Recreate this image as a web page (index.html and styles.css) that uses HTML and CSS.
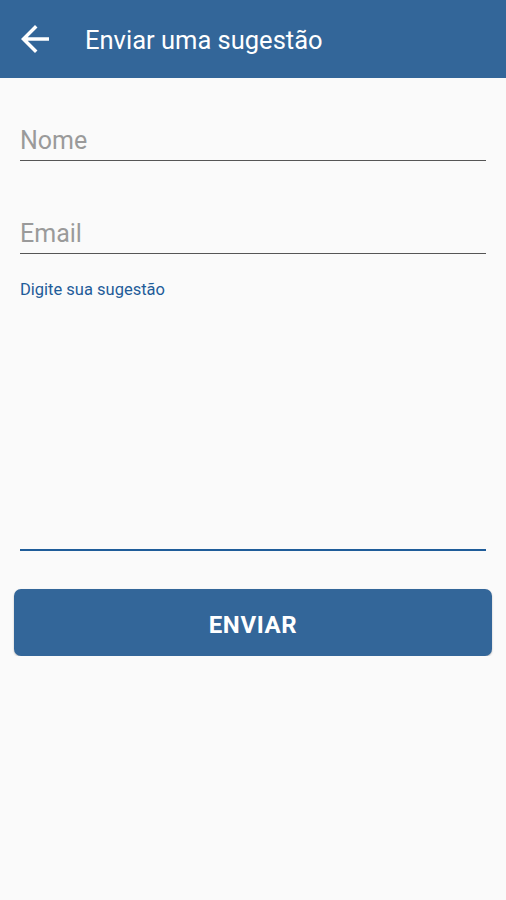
FILE: index.html
```html
<!DOCTYPE html>
<html lang="pt">

<head>
    <meta charset="UTF-8">
    <meta name="viewport" content="width=device-width, initial-scale=1.0">
    <title>Enviar uma sugestão</title>
    <link rel="stylesheet" href="styles.css">
</head>

<body>
    <header class="appbar">
        <button class="back_btn" aria-label="Voltar">
            <svg viewBox="0 0 24 24" width="42" height="42">
                <path fill="#fff" d="M20 11H7.83l5.59-5.59L12 4l-8 8 8 8 1.41-1.41L7.83 13H20v-2z" />
            </svg>
        </button>
        <h1 class="appbar_title">Enviar uma sugestão</h1>
    </header>

    <main class="form">
        <input class="field field_nome" type="text" name="nome" placeholder="Nome">
        <input class="field field_email" type="email" name="email" placeholder="Email">
        <label class="sug_label" for="sugestao">Digite sua sugestão</label>
        <textarea class="sug_area" id="sugestao" name="sugestao"></textarea>
        <button class="send_btn">ENVIAR</button>
    </main>
</body>

</html>
```

FILE: styles.css
```css
body {
    margin: 0;
    background-color: #fafafa;
    font-family: Roboto, "Liberation Sans", sans-serif;
}

.appbar {
    height: 78px;
    background-color: #336699;
    display: flex;
    align-items: center;
    padding-left: 14px;
    box-sizing: border-box;
}

.back_btn {
    width: 42px;
    height: 42px;
    padding: 0;
    border: none;
    background: none;
    display: flex;
}

.appbar_title {
    margin: 2px 0 0 29px;
    color: #fff;
    font-size: 25.5px;
    font-weight: 400;
}

.form {
    display: flex;
    flex-direction: column;
    padding: 0 20px;
}

.field {
    height: 36px;
    padding: 0 0 5px 0;
    border: none;
    border-bottom: 1px solid #555;
    background: none;
    font-family: inherit;
    font-size: 25px;
    line-height: 30px;
    color: #333;
    box-sizing: border-box;
    outline: none;
}

.field::placeholder {
    color: #9a9a9a;
}

.field_nome {
    margin-top: 47px;
}

.field_email {
    margin-top: 57px;
}

.sug_label {
    margin-top: 26px;
    font-size: 16.5px;
    line-height: 20px;
    color: #1f5c99;
}

.sug_area {
    height: 251px;
    border: none;
    border-bottom: 2px solid #1f5c99;
    background: none;
    resize: none;
    box-sizing: border-box;
    outline: none;
    font-family: inherit;
}

.send_btn {
    margin: 38px -6px 0;
    height: 67px;
    padding-top: 5px;
    border: none;
    border-radius: 7px;
    background-color: #336699;
    color: #fff;
    font-family: inherit;
    font-size: 24px;
    font-weight: 700;
    letter-spacing: 0.6px;
    box-shadow: 0 1px 2px rgba(0, 0, 0, 0.25);
}
```
